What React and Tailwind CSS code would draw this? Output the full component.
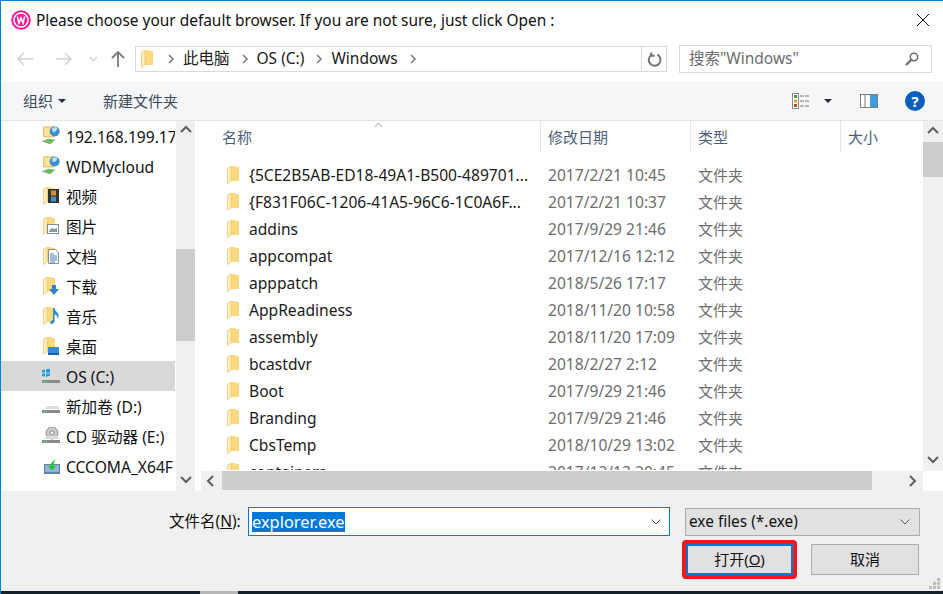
const font = { fontFamily: '"Noto Sans", "Noto Sans CJK SC", sans-serif' };

const files = [
  ["{5CE2B5AB-ED18-49A1-B500-489701...", "2017/2/21 10:45"],
  ["{F831F06C-1206-41A5-96C6-1C0A6F...", "2017/2/21 10:37"],
  ["addins", "2017/9/29 21:46"],
  ["appcompat", "2017/12/16 12:12"],
  ["apppatch", "2018/5/26 17:17"],
  ["AppReadiness", "2018/11/20 10:58"],
  ["assembly", "2018/11/20 17:09"],
  ["bcastdvr", "2018/2/27 2:12"],
  ["Boot", "2017/9/29 21:46"],
  ["Branding", "2017/9/29 21:46"],
  ["CbsTemp", "2018/10/29 13:02"],
  ["containers", "2017/12/13 20:45"],
];

const Folder = ({ className = "" }) => (
  <svg viewBox="0 0 13 18" className={`w-[13px] h-[18px] ${className}`}>
    <path d="M3 0h5l1 1h3v14H3z" fill="#fbd97c" />
    <path d="M.5 2L4 .5V15L.5 17.500z" fill="#fdeebd" stroke="#ecc977" strokeWidth=".8" />
  </svg>
);

const NetDrive = () => (
  <svg viewBox="0 0 22 22" className="w-[20px] h-[20px]">
    <path d="M3 1h11v11H3z" fill="#fbe39a" stroke="#d9b657" />
    <circle cx="15" cy="6" r="5.5" fill="#3f8fd0" />
    <path d="M12 3c2-2 5-2 6 0l-2 3-3 1z" fill="#bfe2f5" />
    <path d="M1 17l7-3 8 1-6 5z" fill="#6cbb5a" />
    <path d="M1 17h5l3 2" fill="none" stroke="#9a9a9a" />
  </svg>
);

const Overlay = ({ type }) => {
  if (type === "video")
    return (
      <svg viewBox="0 0 11 14" className="absolute left-[5px] top-[2px] w-[11px] h-[14px]">
        <rect width="11" height="14" fill="#333" />
        <rect x="3" y="1.5" width="5" height="5" fill="#d9902f" />
        <rect x="3" y="7.5" width="5" height="5" fill="#4b8fc8" />
      </svg>
    );
  if (type === "image")
    return (
      <svg viewBox="0 0 12 10" className="absolute left-[4px] top-[7px] w-[12px] h-[10px]">
        <rect x=".5" y=".5" width="11" height="9" fill="#fff" stroke="#8a8a8a" />
        <path d="M2 7l3-3 2 1 3-1v4H2z" fill="#7a9cb0" />
      </svg>
    );
  if (type === "doc")
    return (
      <svg viewBox="0 0 11 15" className="absolute left-[5px] top-[2px] w-[11px] h-[15px]">
        <path d="M.5.5h7l3 3v11H.5z" fill="#fff" stroke="#8a8a8a" />
        <path d="M2 5h4M2 7h7M2 9h7M2 11h7M2 13h5" stroke="#3d7fb8" />
      </svg>
    );
  if (type === "down")
    return (
      <svg viewBox="0 0 10 10" className="absolute left-[6px] top-[8px] w-[10px] h-[10px]">
        <path d="M3 0h4v4h3L5 10 0 4h3z" fill="#2f80d0" />
      </svg>
    );
  if (type === "music")
    return (
      <svg viewBox="0 0 9 16" className="absolute left-[7px] top-[1px] w-[9px] h-[16px]">
        <path d="M3 0h1.5c0 3 4 4 4 8 0 1-.5 2-1 3 0-3-1-4-3-5v7c0 2-2 3-3.5 3S0 14 1 13s2-1 2-1z" fill="#2a8fe0" />
      </svg>
    );
  return (
    <svg viewBox="0 0 11 8" className="absolute left-[5px] top-[10px] w-[11px] h-[8px]">
      <rect width="11" height="8" fill="#2b8fe0" />
      <rect y="6" width="11" height="2" fill="#1d5f9e" />
    </svg>
  );
};

const LibIcon = ({ type }) => (
  <div className="relative w-[17px] h-[18px] ml-[2px]">
    <Folder />
    <Overlay type={type} />
  </div>
);

const Drive = ({ children }) => (
  <svg viewBox="0 0 20 18" className="w-5 h-[18px]">
    {children}
    <path d="M3 12l4-3h9l3 3z" fill="#dcdcdc" />
    <path d="M1 13h18v3H1z" fill="#8a8a8a" />
    <rect x="3" y="14" width="3" height="1.5" fill="#5fd35f" />
  </svg>
);

const sideItems = [
  { label: "192.168.199.17", icon: <NetDrive /> },
  { label: "WDMycloud", icon: <NetDrive /> },
  { label: "视频", icon: <LibIcon type="video" /> },
  { label: "图片", icon: <LibIcon type="image" /> },
  { label: "文档", icon: <LibIcon type="doc" /> },
  { label: "下载", icon: <LibIcon type="down" /> },
  { label: "音乐", icon: <LibIcon type="music" /> },
  { label: "桌面", icon: <LibIcon type="desk" /> },
  {
    label: "OS (C:)",
    selected: true,
    icon: (
      <Drive>
        <path d="M1 3l3-.5v3H1zM5 2.300l4-.6v4H5zM1 6.500h3v3l-3-.5zM5 6.500h4v4l-4-.6z" fill="#1ba1e2" />
      </Drive>
    ),
  },
  { label: "新加卷 (D:)", icon: <Drive /> },
  {
    label: "CD 驱动器 (E:)",
    icon: (
      <Drive>
        <circle cx="11" cy="6" r="6" fill="#c9c9c9" stroke="#8f8f8f" />
        <circle cx="11" cy="6" r="2" fill="#fff" stroke="#8f8f8f" />
      </Drive>
    ),
  },
  {
    label: "CCCOMA_X64F",
    icon: (
      <svg viewBox="0 0 18 16" className="w-[18px] h-4 ml-[2px]">
        <path d="M1 6h16v10H1z" fill="#5f86a8" />
        <path d="M2 7h14v7H2z" fill="#8fb4d2" />
        <path d="M9 12L5 8h2.500c0-3 2-5 5.500-7-2 2-2.500 4-2.500 7H13z" fill="#22c42e" />
      </svg>
    ),
  },
];

const Chevron = ({ dir, className = "" }) => {
  const d = {
    up: "M1 7l5-5 5 5",
    down: "M1 2l5 5 5-5",
    left: "M7 1L2 6l5 5",
    right: "M3 1l5 5-5 5",
  }[dir];
  return (
    <svg viewBox="0 0 12 12" className={`w-3 h-3 ${className}`} fill="none" stroke="#5f5f5f" strokeWidth="2">
      <path d={d} />
    </svg>
  );
};

const Crumb = ({ children }) => (
  <>
    <svg viewBox="0 0 8 10" className="w-2 h-[10px]" fill="none" stroke="#777" strokeWidth="1.500">
      <path d="M2 1l4 4-4 4" />
    </svg>
    {children && <span className="text-[15.500px] text-[#1a1a1a] ml-[8px] mr-[11px] whitespace-nowrap">{children}</span>}
  </>
);

export default function App() {
  return (
    <div style={font} className="w-[943px] h-[594px] overflow-hidden flex flex-col bg-white border-l border-t border-[#0b7fd4] relative">
      {/* title */}
      <div className="h-[37px] shrink-0 flex items-center pl-[10px] pr-[14px]">
        <svg viewBox="0 0 20 20" className="w-[20px] h-[20px]">
          <circle cx="10" cy="10" r="8.800" fill="none" stroke="#f01e9b" strokeWidth="2" />
          <circle cx="10" cy="10" r="6.300" fill="#f01e9b" />
          <path d="M6.300 6.500l1.700 6.500 2-5 2 5 1.700-6.500" fill="none" stroke="#fff" strokeWidth="1.500" />
        </svg>
        <span className="ml-[5px] pt-[3px] text-[15.450px] text-[#111]">Please choose your default browser. If you are not sure, just click Open :</span>
        <svg viewBox="0 0 12 12" className="ml-auto w-3 h-3" fill="none" stroke="#111" strokeWidth="1">
          <path d="M0 0l12 12M12 0L0 12" />
        </svg>
      </div>

      {/* nav */}
      <div className="h-[28px] mt-[7px] shrink-0 flex items-center">
        <div className="w-[134px] flex items-center pl-[16px] shrink-0">
          <svg viewBox="0 0 16 14" className="w-4 h-[14px]" fill="none" stroke="#d0d0d0" strokeWidth="1.500"><path d="M16 7H1M7 1L1 7l6 6" /></svg>
          <svg viewBox="0 0 16 14" className="w-4 h-[14px] ml-[23px]" fill="none" stroke="#d0d0d0" strokeWidth="1.500"><path d="M0 7h15M9 1l6 6-6 6" /></svg>
          <svg viewBox="0 0 10 6" className="w-[9px] h-[6px] ml-[17px]" fill="none" stroke="#d0d0d0" strokeWidth="1.300"><path d="M1 1l4 4 4-4" /></svg>
          <svg viewBox="0 0 14 16" className="w-[14px] h-4 ml-[13px]" fill="none" stroke="#7a7a7a" strokeWidth="1.800"><path d="M7 16V1M1 7l6-6 6 6" /></svg>
        </div>
        <div className="w-[507px] h-[26px] border border-[#d9d9d9] flex items-center pl-[5px] shrink-0">
          <Folder className="mr-[13px]" />
          <Crumb>此电脑</Crumb>
          <Crumb>OS (C:)</Crumb>
          <Crumb>Windows</Crumb>
          <Crumb />
        </div>
        <div className="w-[25px] h-[26px] border border-l-0 border-[#d9d9d9] flex items-center justify-center shrink-0">
          <svg viewBox="0 0 16 16" className="w-[15px] h-[15px]" fill="none" stroke="#6e6e6e" strokeWidth="2">
            <path d="M11 2.800A6.300 6.300 0 1 1 4.500 3.200" />
            <path d="M4.500 .5V4H8" />
          </svg>
        </div>
        <div className="w-[253px] h-[28px] ml-[12px] border border-[#d9d9d9] flex items-center pl-[9px] pr-[12px] shrink-0">
          <span className="text-[15.500px] text-[#6d6d6d] whitespace-nowrap">搜索"Windows"</span>
          <svg viewBox="0 0 14 14" className="ml-auto w-[14px] h-[14px]" fill="none" stroke="#6b6b6b">
            <circle cx="9" cy="5" r="3.700" strokeWidth="1.500" />
            <path d="M6.300 7.700L1 13" strokeWidth="2.300" />
          </svg>
        </div>
      </div>

      {/* toolbar */}
      <div className="h-[39px] mt-[9px] shrink-0 flex items-center bg-[#f5f6f7] border-b border-[#e3e4e5] pl-[22px] pr-[18px] text-[15px] text-[#3c4a5c]">
        <span>组织</span>
        <span className="ml-[5px] border-x-[4px] border-t-[4px] border-x-transparent border-t-[#1f2d42]" />
        <span className="ml-[37px]">新建文件夹</span>
        <svg viewBox="0 0 18 16" className="ml-auto w-[18px] h-4">
          <rect x=".5" y=".5" width="6" height="15" fill="#fff" stroke="#8a8a8a" />
          <rect x="2" y="2" width="3" height="3" fill="#5a8f4a" />
          <rect x="2" y="6.500" width="3" height="3" fill="#d9a62e" />
          <rect x="2" y="11" width="3" height="3" fill="#c2452d" />
          <path d="M8 3h10M8 8h10M8 13h10" stroke="#777" strokeDasharray="4 1" />
        </svg>
        <span className="ml-[14px] border-x-[4px] border-t-[4px] border-x-transparent border-t-[#1f2d42]" />
        <svg viewBox="0 0 18 14" className="ml-[28px] w-[18px] h-[14px]">
          <rect x=".5" y=".5" width="17" height="13" fill="#fff" stroke="#7d7d7d" />
          <rect x="10" y="1" width="7" height="12" fill="#3f9be8" />
          <path d="M5 1v12" stroke="#7d7d7d" />
        </svg>
        <div className="ml-[27px] w-5 h-5 rounded-full bg-[#0a5fb8] text-white text-[15px] font-bold flex items-center justify-center">?</div>
      </div>

      {/* body */}
      <div className="h-[370px] shrink-0 flex">
        <div className="w-[174px] shrink-0 overflow-hidden text-[15.600px] text-[#111]">
          {sideItems.map((it) => (
            <div key={it.label} className={`h-[30px] flex items-center pl-[40px] whitespace-nowrap overflow-hidden ${it.selected ? "bg-[#d9d9d9]" : ""}`}>
              <div className="w-[25px] shrink-0 flex items-center">{it.icon}</div>
              <span className="pt-[3px]">{it.label}</span>
            </div>
          ))}
        </div>
        <div className="w-[19px] ml-px shrink-0 bg-[#f0f0f0] flex flex-col items-center">
          <div className="h-[20px] flex items-center"><Chevron dir="up" /></div>
          <div className="h-[108px]" />
          <div className="w-full h-[92px] bg-[#cdcdcd]" />
          <div className="flex-1" />
          <div className="h-[20px] flex items-center"><Chevron dir="down" /></div>
        </div>
        <div className="w-[6px] shrink-0" />
        <div className="flex-1 min-w-0 flex flex-col">
          <div className="flex-1 min-h-0 flex">
            <div className="flex-1 min-w-0 overflow-hidden">
              <div className="h-[32px] flex text-[15px] text-[#4c607a] relative">
                <svg viewBox="0 0 10 5" className="absolute left-[173px] top-[1px] w-[9px] h-[5px]" fill="none" stroke="#8a8a8a"><path d="M1 5l4-4 4 4" /></svg>
                <div className="w-[340px] flex items-center pl-[21px] border-r border-[#e5e5e5]">名称</div>
                <div className="w-[150px] flex items-center pl-[7px] border-r border-[#e5e5e5]">修改日期</div>
                <div className="w-[150px] flex items-center pl-[7px] border-r border-[#e5e5e5]">类型</div>
                <div className="flex items-center pl-[7px]">大小</div>
              </div>
              <div className="pt-[9px] h-[317px] overflow-hidden">
                {files.map(([name, date]) => (
                  <div key={name} className="h-[27px] flex items-center whitespace-nowrap text-[15.600px]">
                    <div className="w-[340px] flex items-center pl-[26px] text-[#1a1a1a]">
                      <Folder />
                      <span className="ml-[9px]">{name}</span>
                    </div>
                    <span className="w-[150px] pl-[7px] text-[#6d6d6d]">{date}</span>
                    <span className="pl-[7px] text-[15px] text-[#6d6d6d]">文件夹</span>
                  </div>
                ))}
              </div>
            </div>
            <div className="w-[20px] shrink-0 bg-[#f0f0f0] flex flex-col items-center">
              <div className="h-[21px] flex items-center"><Chevron dir="up" /></div>
              <div className="w-full h-[35px] bg-[#cdcdcd]" />
              <div className="flex-1" />
              <div className="h-[20px] flex items-center"><Chevron dir="down" /></div>
            </div>
          </div>
          <div className="h-[20px] shrink-0 flex">
            <div className="flex-1 bg-[#f0f0f0] flex">
              <div className="w-[21px] flex items-center justify-center"><Chevron dir="left" /></div>
              <div className="w-[650px] h-[19px] bg-[#cdcdcd]" />
              <div className="flex-1" />
              <div className="w-[20px] flex items-center justify-center"><Chevron dir="right" /></div>
            </div>
            <div className="w-[20px] shrink-0 bg-white" />
          </div>
        </div>
      </div>

      {/* footer */}
      <div className="flex-1 bg-[#f0f0f0] relative">
        <div className="flex items-center pt-[16px] pl-[168px] h-[45px]">
          <span className="text-[15.500px] text-[#111] whitespace-nowrap w-[79px]">文件名(<span className="underline">N</span>):</span>
          <div className="w-[422px] h-[29px] bg-white border border-[#0078d7] flex items-center pl-[3px] pr-[8px] text-[16.400px]">
            <span className="bg-[#0078d7] text-white leading-[20px]">explorer.exe</span>
            <svg viewBox="0 0 10 6" className="ml-auto w-[10px] h-[6px]" fill="none" stroke="#555"><path d="M.5 .5l4.500 4.500 4.500-4.500" /></svg>
          </div>
          <div className="ml-[15px] w-[235px] h-[28px] bg-[#e1e1e1] border border-[#adadad] flex items-center pl-[3px] pr-[9px] text-[15.400px] text-[#111]">
            <span>exe files (*.exe)</span>
            <svg viewBox="0 0 10 6" className="ml-auto w-[10px] h-[6px]" fill="none" stroke="#555"><path d="M.5 .5l4.500 4.500 4.500-4.500" /></svg>
          </div>
        </div>
        <div className="flex justify-end pr-[24px] mt-[8px] text-[15px] text-[#111]">
          <div className="w-[107px] h-[31px] bg-[#e1e1e1] border-2 border-[#0078d7] flex items-center justify-center relative">
            <span>打开(<span className="underline">O</span>)</span>
            <div className="absolute -inset-[6px] border-[4px] border-[#f01818] rounded-[4px]" />
          </div>
          <div className="w-[108px] h-[31px] ml-[18px] bg-[#e1e1e1] border border-[#adadad] flex items-center justify-center">取消</div>
        </div>
        <svg viewBox="0 0 11 11" className="absolute right-[3px] bottom-[5px] w-[11px] h-[11px]" fill="#bdbdbd">
          <path d="M8 0h3v3H8zM4 4h3v3H4zM8 4h3v3H8zM0 8h3v3H0zM4 8h3v3H4zM8 8h3v3H8z" />
        </svg>
        <div className="absolute left-[-1px] right-0 bottom-0 h-[3px] bg-[#16212c] flex">
          <div className="ml-[200px] w-[38px] bg-[#b8b8b8]" />
        </div>
      </div>
    </div>
  );
}
